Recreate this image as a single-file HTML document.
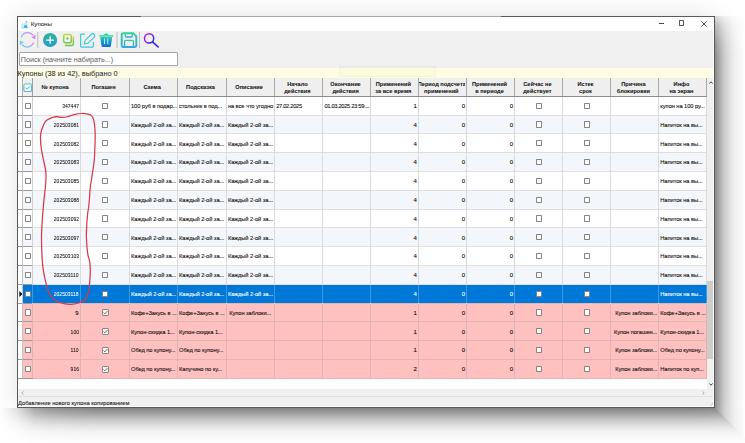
<!DOCTYPE html>
<html><head><meta charset="utf-8"><style>
*{box-sizing:border-box;margin:0;padding:0}
html,body{width:745px;height:443px;overflow:hidden;background:#fff}
body{position:relative;font-family:"Liberation Sans",sans-serif;color:#1b1b1b}
.ab{position:absolute}
.t{position:absolute;white-space:nowrap;overflow:hidden;font-size:5.75px;line-height:8px;letter-spacing:-0.08px;-webkit-text-stroke:0.08px currentColor}
.n{position:absolute;white-space:nowrap;font-size:6px;line-height:8px;text-align:right;-webkit-text-stroke:0.05px currentColor}
.hd{position:absolute;font-weight:bold;font-size:5.65px;line-height:6.9px;text-align:center;white-space:nowrap;overflow:hidden;color:#111;-webkit-text-stroke:0.05px currentColor}
.cb{position:absolute;width:6.3px;height:6.3px;border:0.85px solid #858585;background:#fff;border-radius:0.8px}
</style></head><body>

<div class="ab" style="left:17px;top:16px;width:698px;height:392px;box-shadow:0 0 24px rgba(0,0,0,0.12)"></div>
<div class="ab" style="left:715px;top:16px;width:30px;height:392px;background:linear-gradient(to right,rgba(0,0,0,0.420) 0px,rgba(0,0,0,0.370) 2px,rgba(0,0,0,0.310) 4px,rgba(0,0,0,0.260) 6px,rgba(0,0,0,0.210) 8px,rgba(0,0,0,0.160) 10.5px,rgba(0,0,0,0.130) 13.5px,rgba(0,0,0,0.090) 16.5px,rgba(0,0,0,0.060) 19.5px,rgba(0,0,0,0.037) 23.5px,rgba(0,0,0,0.020) 27.5px,rgba(0,0,0,0.000) 30px);-webkit-mask-image:linear-gradient(to bottom,rgba(0,0,0,0.27) 0px,rgba(0,0,0,0.55) 9px,rgba(0,0,0,0.75) 19px,rgba(0,0,0,0.89) 29px,rgba(0,0,0,0.98) 39px,#000 50px)"></div>
<div class="ab" style="left:0px;top:408px;width:715px;height:35px;background:linear-gradient(to bottom,rgba(0,0,0,0.470) 0px,rgba(0,0,0,0.410) 2px,rgba(0,0,0,0.310) 7px,rgba(0,0,0,0.245) 10px,rgba(0,0,0,0.190) 13px,rgba(0,0,0,0.125) 17px,rgba(0,0,0,0.087) 20px,rgba(0,0,0,0.048) 24px,rgba(0,0,0,0.030) 28px,rgba(0,0,0,0.015) 32px,rgba(0,0,0,0.000) 35px);-webkit-mask-image:linear-gradient(to right,rgba(0,0,0,0) 0px,rgba(0,0,0,0.1) 8px,rgba(0,0,0,0.23) 17px,rgba(0,0,0,0.43) 25px,rgba(0,0,0,0.7) 35px,rgba(0,0,0,0.84) 50px,rgba(0,0,0,0.93) 70px,#000 100px)"></div>
<div class="ab" style="left:715px;top:408px;width:30px;height:35px;background:linear-gradient(to right,rgba(0,0,0,0.420) 0px,rgba(0,0,0,0.370) 2px,rgba(0,0,0,0.310) 4px,rgba(0,0,0,0.260) 6px,rgba(0,0,0,0.210) 8px,rgba(0,0,0,0.160) 10.5px,rgba(0,0,0,0.130) 13.5px,rgba(0,0,0,0.090) 16.5px,rgba(0,0,0,0.060) 19.5px,rgba(0,0,0,0.037) 23.5px,rgba(0,0,0,0.020) 27.5px,rgba(0,0,0,0.000) 30px);clip-path:polygon(0 0,30px 0,30px 30px)"></div>
<div class="ab" style="left:715px;top:408px;width:30px;height:35px;background:linear-gradient(to bottom,rgba(0,0,0,0.470) 0px,rgba(0,0,0,0.410) 2px,rgba(0,0,0,0.310) 7px,rgba(0,0,0,0.245) 10px,rgba(0,0,0,0.190) 13px,rgba(0,0,0,0.125) 17px,rgba(0,0,0,0.087) 20px,rgba(0,0,0,0.048) 24px,rgba(0,0,0,0.030) 28px,rgba(0,0,0,0.015) 32px,rgba(0,0,0,0.000) 35px);clip-path:polygon(0 0,30px 30px,30px 35px,0 35px)"></div>
<div class="ab" style="left:17px;top:16px;width:698px;height:392px;background:#f0f0f0;border:1px solid #5a5a5a"></div>
<div class="ab" style="left:141px;top:16px;width:360px;height:1px;background:#a8a8a8"></div>
<div class="ab" style="left:18px;top:17px;width:696px;height:13.5px;background:#fff"></div>
<div class="ab" style="left:30.8px;top:20.4px;font-size:6.1px;line-height:7px;color:#222;-webkit-text-stroke:0.05px #222">Купоны</div>
<svg class="ab" style="left:20px;top:18.5px" width="10" height="10" viewBox="0 0 10 10">
<path d="M1 5.2 L6.8 3.6 L8.6 8.8 L1.4 8.8 Z" fill="#c9eef3"/>
<path d="M1.2 8.8 H8.6" stroke="#7fd0dd" stroke-width="0.8"/>
<circle cx="5.6" cy="7.4" r="1.5" fill="#2fa9cf"/>
<path d="M6.5 0.8 L7 2.2 L8.4 2.3 L7.3 3.1 L7.7 4.5 L6.5 3.7 L5.3 4.5 L5.7 3.1 L4.6 2.3 L6 2.2 Z" fill="#8fdbe6"/>
<path d="M2 4.6 L3.2 3.2" stroke="#a8e2ea" stroke-width="0.6"/>
</svg>
<div class="ab" style="left:658.5px;top:22.8px;width:5px;height:0.8px;background:#444"></div>
<div class="ab" style="left:679.2px;top:20.4px;width:5.2px;height:5.2px;border:0.8px solid #555;border-radius:0.8px"></div>
<svg class="ab" style="left:700.5px;top:20.5px" width="6" height="6" viewBox="0 0 6 6"><path d="M0.3 0.3 L5.7 5.7 M5.7 0.3 L0.3 5.7" stroke="#333" stroke-width="0.8"/></svg>
<svg class="ab" style="left:0;top:0" width="745" height="60" viewBox="0 0 745 60">
<defs>
<linearGradient id="gref" x1="0" y1="1" x2="1" y2="0"><stop offset="0" stop-color="#74cbf5"/><stop offset="1" stop-color="#d983f2"/></linearGradient>
<linearGradient id="gplus" x1="0" y1="0" x2="0" y2="1"><stop offset="0" stop-color="#2fb39b"/><stop offset="1" stop-color="#2a9ccc"/></linearGradient>
<linearGradient id="gcopy" x1="0" y1="0" x2="0" y2="1"><stop offset="0" stop-color="#b6dc4e"/><stop offset="1" stop-color="#6cc24a"/></linearGradient>
<linearGradient id="gedit" x1="0" y1="0" x2="1" y2="1"><stop offset="0" stop-color="#3fd2c8"/><stop offset="1" stop-color="#46c0e6"/></linearGradient>
<linearGradient id="gtrash" x1="0" y1="0" x2="0" y2="1"><stop offset="0" stop-color="#2ed3a8"/><stop offset="0.35" stop-color="#1a9fc8"/><stop offset="1" stop-color="#1466d8"/></linearGradient>
<linearGradient id="gsave" x1="0" y1="0" x2="0" y2="1"><stop offset="0" stop-color="#2fd39a"/><stop offset="1" stop-color="#33a4e8"/></linearGradient>
<linearGradient id="gsrch" x1="0" y1="0" x2="1" y2="1"><stop offset="0" stop-color="#c21fe6"/><stop offset="1" stop-color="#3d1fd6"/></linearGradient>
</defs>
<path d="M21.3 37.2 A6.8 6.8 0 0 1 33.2 35.4" fill="none" stroke="url(#gref)" stroke-width="1.3"/>
<path d="M35.6 34.6 L35.3 39.2 L31.3 37.6 Z" fill="#d983f2"/>
<path d="M33.6 42.6 A6.8 6.8 0 0 1 21.8 44.3" fill="none" stroke="url(#gref)" stroke-width="1.3"/>
<path d="M19.6 45.0 L20.0 40.4 L24.0 42.2 Z" fill="#74cbf5"/>
<rect x="37.3" y="32" width="1" height="16" fill="#bcbcbc"/>
<circle cx="50.1" cy="40" r="7.1" fill="url(#gplus)"/>
<path d="M46.3 40 H53.9 M50.1 36.2 V43.8" stroke="#fff" stroke-width="1.25"/>
<path d="M73.4 36.6 V43.6 Q73.4 45.6 71.4 45.6 H65" fill="none" stroke="url(#gcopy)" stroke-width="1.5"/>
<rect x="63.7" y="34.5" width="7.6" height="8.2" rx="1.4" fill="#f4f9ea" stroke="url(#gcopy)" stroke-width="1.5"/>
<rect x="66.3" y="37.4" width="2.2" height="2.2" fill="#72c64a" transform="rotate(45 67.4 38.5)"/>
<path d="M85 34.2 H81.4 Q80.6 34.2 80.6 35 V46.3 Q80.6 47.1 81.4 47.1 H92.6 Q93.4 47.1 93.4 46.3 V42" fill="none" stroke="url(#gedit)" stroke-width="1.2"/>
<path d="M84.2 44 L85 40.6 L91.6 34 Q92.6 33 93.6 34 L94.4 34.8 Q95.4 35.8 94.4 36.8 L87.8 43.4 Z" fill="none" stroke="url(#gedit)" stroke-width="1.2" stroke-linejoin="round"/>
<path d="M99.2 35.9 H113.2" stroke="#2ed3a8" stroke-width="1.4"/>
<path d="M104 35.3 Q104 33.4 105.5 33.4 H107 Q108.6 33.4 108.6 35.3 Z" fill="#2ed3a8"/>
<path d="M100.2 37 H112.2 L110.9 46 Q110.7 47.1 109.6 47.1 H102.8 Q101.7 47.1 101.5 46 Z" fill="url(#gtrash)"/>
<rect x="104.1" y="38.6" width="1" height="5.6" fill="#bdf3f0"/>
<rect x="107.3" y="38.6" width="1" height="5.6" fill="#bdf3f0"/>
<rect x="116.5" y="32" width="1" height="16" fill="#bcbcbc"/>
<path d="M123 33.2 H133.2 L136.3 36.3 V45.6 Q136.3 47 134.9 47 H122.9 Q121.7 47 121.7 45.6 V34.5 Q121.7 33.2 123 33.2 Z" fill="none" stroke="url(#gsave)" stroke-width="1.9"/>
<path d="M125.4 33.6 V36.2 Q125.4 37 126.2 37 H131.4 Q132.2 37 132.2 36.2 V33.6" fill="none" stroke="url(#gsave)" stroke-width="1.3"/>
<path d="M124.6 46.6 V41.4 Q124.6 40.4 125.6 40.4 H132.4 Q133.4 40.4 133.4 41.4 V46.6" fill="none" stroke="url(#gsave)" stroke-width="1.3"/>
<rect x="139" y="32" width="1" height="16" fill="#bcbcbc"/>
<circle cx="149.1" cy="38.4" r="4.6" fill="none" stroke="url(#gsrch)" stroke-width="1.5"/>
<path d="M152.5 41.9 L158.2 47" stroke="#3d1fd6" stroke-width="1.6" stroke-linecap="round"/>
</svg>
<div class="ab" style="left:19px;top:52px;width:159px;height:14px;background:#fff;border:1px solid #a6a6a6;border-radius:1px"></div>
<div class="ab" style="left:20.8px;top:55.5px;font-size:7.2px;line-height:8px;color:#5e5e5e;white-space:nowrap">Поиск (начните набирать...)</div>
<div class="ab" style="left:18px;top:68px;width:696px;height:9.6px;background:#fefde4"></div>
<div class="ab" style="left:17.6px;top:70.3px;font-size:7.35px;line-height:8.5px;color:#1a1a1a;white-space:nowrap">Купоны (38 из 42), выбрано 0</div>
<div class="ab" style="left:339px;top:66px;width:97px;height:11px;background:rgba(150,190,60,0.04);border:0.5px solid rgba(120,140,80,0.04)"></div>
<div class="ab" style="left:18px;top:77.6px;width:689px;height:311.4px;background:#fff"></div>
<div class="ab" style="left:18px;top:77.6px;width:689px;height:18.9px;background:#efefef"></div>
<div class="ab" style="left:18px;top:77.6px;width:4.5px;height:18.9px;background:#f8f8f8"></div>
<svg class="ab" style="left:23px;top:82.5px" width="9.5" height="9.5" viewBox="0 0 9.5 9.5">
<defs><linearGradient id="ghc" x1="0" y1="0" x2="0" y2="1"><stop offset="0" stop-color="#62d8c6"/><stop offset="1" stop-color="#5ab4ea"/></linearGradient></defs>
<rect x="0.9" y="0.9" width="7.7" height="7.7" rx="1.6" fill="#fff" stroke="url(#ghc)" stroke-width="1.3"/>
<path d="M2.6 4.9 L4.1 6.2 L7 3.2" fill="none" stroke="#3fb6c8" stroke-width="1"/>
</svg>
<div class="hd" style="left:31.7px;top:83.9px;width:46.8px">№ купона</div>
<div class="hd" style="left:79.5px;top:83.9px;width:48.1px">Погашен</div>
<div class="hd" style="left:128.6px;top:83.9px;width:47.0px">Схема</div>
<div class="hd" style="left:176.6px;top:83.9px;width:47.9px">Подсказка</div>
<div class="hd" style="left:225.5px;top:83.9px;width:47.3px">Описание</div>
<div class="hd" style="left:273.8px;top:80.7px;width:47.2px">Начало<br>действия</div>
<div class="hd" style="left:322.0px;top:80.7px;width:47.1px">Окончание<br>действия</div>
<div class="hd" style="left:370.1px;top:80.7px;width:46.6px">Применений<br>за все время</div>
<div class="hd" style="left:417.7px;top:80.7px;width:47.3px">Период подсчета<br>применений</div>
<div class="hd" style="left:466.0px;top:80.7px;width:47.0px">Применений<br>в периоде</div>
<div class="hd" style="left:514.0px;top:80.7px;width:46.9px">Сейчас не<br>действует</div>
<div class="hd" style="left:561.9px;top:80.7px;width:47.1px">Истек<br>срок</div>
<div class="hd" style="left:610.0px;top:80.7px;width:46.9px">Причина<br>блокировки</div>
<div class="hd" style="left:657.9px;top:80.7px;width:47.2px">Инфо<br>на экран</div>
<div class="ab" style="left:80px;top:78px;width:1px;height:18px;background:#a9a9a9"></div>
<div class="ab" style="left:129px;top:78px;width:1px;height:18px;background:#a9a9a9"></div>
<div class="ab" style="left:177px;top:78px;width:1px;height:18px;background:#a9a9a9"></div>
<div class="ab" style="left:226px;top:78px;width:1px;height:18px;background:#a9a9a9"></div>
<div class="ab" style="left:274px;top:78px;width:1px;height:18px;background:#a9a9a9"></div>
<div class="ab" style="left:322px;top:78px;width:1px;height:18px;background:#a9a9a9"></div>
<div class="ab" style="left:370px;top:78px;width:1px;height:18px;background:#a9a9a9"></div>
<div class="ab" style="left:418px;top:78px;width:1px;height:18px;background:#a9a9a9"></div>
<div class="ab" style="left:466px;top:78px;width:1px;height:18px;background:#a9a9a9"></div>
<div class="ab" style="left:514px;top:78px;width:1px;height:18px;background:#a9a9a9"></div>
<div class="ab" style="left:562px;top:78px;width:1px;height:18px;background:#a9a9a9"></div>
<div class="ab" style="left:610px;top:78px;width:1px;height:18px;background:#a9a9a9"></div>
<div class="ab" style="left:658px;top:78px;width:1px;height:18px;background:#a9a9a9"></div>
<div class="ab" style="left:706px;top:78px;width:1px;height:18px;background:#a9a9a9"></div>
<div class="ab" style="left:22px;top:78px;width:1px;height:18px;background:#b0b0b0"></div>
<div class="ab" style="left:32px;top:78px;width:1px;height:18px;background:#a0a0a0"></div>
<div class="ab" style="left:18px;top:96px;width:689px;height:1px;background:#8c8c8c"></div>
<div class="ab" style="left:32.5px;top:96.8px;width:674.3px;height:17.8px;background:#ffffff"></div>
<div class="ab" style="left:22.5px;top:96.8px;width:10px;height:17.8px;background:#ffffff"></div>
<div class="cb" style="left:24.5px;top:102.5px"></div>
<div class="n" style="right:666.3px;top:102.0px;color:#0a0a0a;transform:scaleX(0.84);transform-origin:100% 50%;">347447</div>
<div class="cb" style="left:102.0px;top:102.6px"></div>
<div class="t" style="left:131.0px;top:102.0px;width:46.0px;color:#0a0a0a">100 руб в подар...</div>
<div class="t" style="left:179.0px;top:102.0px;width:46.9px;color:#0a0a0a">стольник в под...</div>
<div class="t" style="left:227.9px;top:102.0px;width:46.3px;color:#0a0a0a">на все что угодно</div>
<div class="t" style="left:276.2px;top:102.0px;width:46.2px;color:#0a0a0a;letter-spacing:-0.32px">27.02.2025</div>
<div class="t" style="left:324.4px;top:102.0px;width:46.1px;color:#0a0a0a;letter-spacing:-0.32px">01.03.2025 23:59:...</div>
<div class="n" style="right:328.1px;top:102.0px;color:#0a0a0a;-webkit-text-stroke:0.1px currentColor;">1</div>
<div class="n" style="right:279.8px;top:102.0px;color:#0a0a0a;-webkit-text-stroke:0.1px currentColor;">0</div>
<div class="n" style="right:231.8px;top:102.0px;color:#0a0a0a;-webkit-text-stroke:0.1px currentColor;">0</div>
<div class="cb" style="left:535.9px;top:102.6px"></div>
<div class="cb" style="left:583.9px;top:102.6px"></div>
<div class="t" style="left:660.3px;top:102.0px;width:46.2px;color:#0a0a0a">купон на 100 ру...</div>
<div class="ab" style="left:32.5px;top:115.6px;width:674.3px;height:17.8px;background:#f3f6fb"></div>
<div class="ab" style="left:22.5px;top:115.6px;width:10px;height:17.8px;background:#f3f6fb"></div>
<div class="cb" style="left:24.5px;top:121.3px"></div>
<div class="n" style="right:666.3px;top:120.8px;color:#0a0a0a;transform:scaleX(0.84);transform-origin:100% 50%;">202503081</div>
<div class="cb" style="left:102.0px;top:121.4px"></div>
<div class="t" style="left:131.0px;top:120.8px;width:46.0px;color:#0a0a0a">Каждый 2-ой за...</div>
<div class="t" style="left:179.0px;top:120.8px;width:46.9px;color:#0a0a0a">Каждый 2-ой за...</div>
<div class="t" style="left:227.9px;top:120.8px;width:46.3px;color:#0a0a0a">Каждый 2-ой за...</div>
<div class="n" style="right:328.1px;top:120.8px;color:#0a0a0a;-webkit-text-stroke:0.1px currentColor;">4</div>
<div class="n" style="right:279.8px;top:120.8px;color:#0a0a0a;-webkit-text-stroke:0.1px currentColor;">0</div>
<div class="n" style="right:231.8px;top:120.8px;color:#0a0a0a;-webkit-text-stroke:0.1px currentColor;">0</div>
<div class="cb" style="left:535.9px;top:121.4px"></div>
<div class="cb" style="left:583.9px;top:121.4px"></div>
<div class="t" style="left:660.3px;top:120.8px;width:46.2px;color:#0a0a0a">Напиток на вы...</div>
<div class="ab" style="left:32.5px;top:134.4px;width:674.3px;height:17.8px;background:#ffffff"></div>
<div class="ab" style="left:22.5px;top:134.4px;width:10px;height:17.8px;background:#ffffff"></div>
<div class="cb" style="left:24.5px;top:140.1px"></div>
<div class="n" style="right:666.3px;top:139.6px;color:#0a0a0a;transform:scaleX(0.84);transform-origin:100% 50%;">202503082</div>
<div class="cb" style="left:102.0px;top:140.2px"></div>
<div class="t" style="left:131.0px;top:139.6px;width:46.0px;color:#0a0a0a">Каждый 2-ой за...</div>
<div class="t" style="left:179.0px;top:139.6px;width:46.9px;color:#0a0a0a">Каждый 2-ой за...</div>
<div class="t" style="left:227.9px;top:139.6px;width:46.3px;color:#0a0a0a">Каждый 2-ой за...</div>
<div class="n" style="right:328.1px;top:139.6px;color:#0a0a0a;-webkit-text-stroke:0.1px currentColor;">4</div>
<div class="n" style="right:279.8px;top:139.6px;color:#0a0a0a;-webkit-text-stroke:0.1px currentColor;">0</div>
<div class="n" style="right:231.8px;top:139.6px;color:#0a0a0a;-webkit-text-stroke:0.1px currentColor;">0</div>
<div class="cb" style="left:535.9px;top:140.2px"></div>
<div class="cb" style="left:583.9px;top:140.2px"></div>
<div class="t" style="left:660.3px;top:139.6px;width:46.2px;color:#0a0a0a">Напиток на вы...</div>
<div class="ab" style="left:32.5px;top:153.2px;width:674.3px;height:17.8px;background:#f3f6fb"></div>
<div class="ab" style="left:22.5px;top:153.2px;width:10px;height:17.8px;background:#f3f6fb"></div>
<div class="cb" style="left:24.5px;top:158.9px"></div>
<div class="n" style="right:666.3px;top:158.4px;color:#0a0a0a;transform:scaleX(0.84);transform-origin:100% 50%;">202503083</div>
<div class="cb" style="left:102.0px;top:159.0px"></div>
<div class="t" style="left:131.0px;top:158.4px;width:46.0px;color:#0a0a0a">Каждый 2-ой за...</div>
<div class="t" style="left:179.0px;top:158.4px;width:46.9px;color:#0a0a0a">Каждый 2-ой за...</div>
<div class="t" style="left:227.9px;top:158.4px;width:46.3px;color:#0a0a0a">Каждый 2-ой за...</div>
<div class="n" style="right:328.1px;top:158.4px;color:#0a0a0a;-webkit-text-stroke:0.1px currentColor;">4</div>
<div class="n" style="right:279.8px;top:158.4px;color:#0a0a0a;-webkit-text-stroke:0.1px currentColor;">0</div>
<div class="n" style="right:231.8px;top:158.4px;color:#0a0a0a;-webkit-text-stroke:0.1px currentColor;">0</div>
<div class="cb" style="left:535.9px;top:159.0px"></div>
<div class="cb" style="left:583.9px;top:159.0px"></div>
<div class="t" style="left:660.3px;top:158.4px;width:46.2px;color:#0a0a0a">Напиток на вы...</div>
<div class="ab" style="left:32.5px;top:172.0px;width:674.3px;height:17.8px;background:#ffffff"></div>
<div class="ab" style="left:22.5px;top:172.0px;width:10px;height:17.8px;background:#ffffff"></div>
<div class="cb" style="left:24.5px;top:177.7px"></div>
<div class="n" style="right:666.3px;top:177.2px;color:#0a0a0a;transform:scaleX(0.84);transform-origin:100% 50%;">202503085</div>
<div class="cb" style="left:102.0px;top:177.8px"></div>
<div class="t" style="left:131.0px;top:177.2px;width:46.0px;color:#0a0a0a">Каждый 2-ой за...</div>
<div class="t" style="left:179.0px;top:177.2px;width:46.9px;color:#0a0a0a">Каждый 2-ой за...</div>
<div class="t" style="left:227.9px;top:177.2px;width:46.3px;color:#0a0a0a">Каждый 2-ой за...</div>
<div class="n" style="right:328.1px;top:177.2px;color:#0a0a0a;-webkit-text-stroke:0.1px currentColor;">4</div>
<div class="n" style="right:279.8px;top:177.2px;color:#0a0a0a;-webkit-text-stroke:0.1px currentColor;">0</div>
<div class="n" style="right:231.8px;top:177.2px;color:#0a0a0a;-webkit-text-stroke:0.1px currentColor;">0</div>
<div class="cb" style="left:535.9px;top:177.8px"></div>
<div class="cb" style="left:583.9px;top:177.8px"></div>
<div class="t" style="left:660.3px;top:177.2px;width:46.2px;color:#0a0a0a">Напиток на вы...</div>
<div class="ab" style="left:32.5px;top:190.8px;width:674.3px;height:17.8px;background:#f3f6fb"></div>
<div class="ab" style="left:22.5px;top:190.8px;width:10px;height:17.8px;background:#f3f6fb"></div>
<div class="cb" style="left:24.5px;top:196.5px"></div>
<div class="n" style="right:666.3px;top:196.0px;color:#0a0a0a;transform:scaleX(0.84);transform-origin:100% 50%;">202503088</div>
<div class="cb" style="left:102.0px;top:196.6px"></div>
<div class="t" style="left:131.0px;top:196.0px;width:46.0px;color:#0a0a0a">Каждый 2-ой за...</div>
<div class="t" style="left:179.0px;top:196.0px;width:46.9px;color:#0a0a0a">Каждый 2-ой за...</div>
<div class="t" style="left:227.9px;top:196.0px;width:46.3px;color:#0a0a0a">Каждый 2-ой за...</div>
<div class="n" style="right:328.1px;top:196.0px;color:#0a0a0a;-webkit-text-stroke:0.1px currentColor;">4</div>
<div class="n" style="right:279.8px;top:196.0px;color:#0a0a0a;-webkit-text-stroke:0.1px currentColor;">0</div>
<div class="n" style="right:231.8px;top:196.0px;color:#0a0a0a;-webkit-text-stroke:0.1px currentColor;">0</div>
<div class="cb" style="left:535.9px;top:196.6px"></div>
<div class="cb" style="left:583.9px;top:196.6px"></div>
<div class="t" style="left:660.3px;top:196.0px;width:46.2px;color:#0a0a0a">Напиток на вы...</div>
<div class="ab" style="left:32.5px;top:209.6px;width:674.3px;height:17.8px;background:#ffffff"></div>
<div class="ab" style="left:22.5px;top:209.6px;width:10px;height:17.8px;background:#ffffff"></div>
<div class="cb" style="left:24.5px;top:215.3px"></div>
<div class="n" style="right:666.3px;top:214.8px;color:#0a0a0a;transform:scaleX(0.84);transform-origin:100% 50%;">202503092</div>
<div class="cb" style="left:102.0px;top:215.4px"></div>
<div class="t" style="left:131.0px;top:214.8px;width:46.0px;color:#0a0a0a">Каждый 2-ой за...</div>
<div class="t" style="left:179.0px;top:214.8px;width:46.9px;color:#0a0a0a">Каждый 2-ой за...</div>
<div class="t" style="left:227.9px;top:214.8px;width:46.3px;color:#0a0a0a">Каждый 2-ой за...</div>
<div class="n" style="right:328.1px;top:214.8px;color:#0a0a0a;-webkit-text-stroke:0.1px currentColor;">4</div>
<div class="n" style="right:279.8px;top:214.8px;color:#0a0a0a;-webkit-text-stroke:0.1px currentColor;">0</div>
<div class="n" style="right:231.8px;top:214.8px;color:#0a0a0a;-webkit-text-stroke:0.1px currentColor;">0</div>
<div class="cb" style="left:535.9px;top:215.4px"></div>
<div class="cb" style="left:583.9px;top:215.4px"></div>
<div class="t" style="left:660.3px;top:214.8px;width:46.2px;color:#0a0a0a">Напиток на вы...</div>
<div class="ab" style="left:32.5px;top:228.4px;width:674.3px;height:17.8px;background:#f3f6fb"></div>
<div class="ab" style="left:22.5px;top:228.4px;width:10px;height:17.8px;background:#f3f6fb"></div>
<div class="cb" style="left:24.5px;top:234.1px"></div>
<div class="n" style="right:666.3px;top:233.6px;color:#0a0a0a;transform:scaleX(0.84);transform-origin:100% 50%;">202503097</div>
<div class="cb" style="left:102.0px;top:234.2px"></div>
<div class="t" style="left:131.0px;top:233.6px;width:46.0px;color:#0a0a0a">Каждый 2-ой за...</div>
<div class="t" style="left:179.0px;top:233.6px;width:46.9px;color:#0a0a0a">Каждый 2-ой за...</div>
<div class="t" style="left:227.9px;top:233.6px;width:46.3px;color:#0a0a0a">Каждый 2-ой за...</div>
<div class="n" style="right:328.1px;top:233.6px;color:#0a0a0a;-webkit-text-stroke:0.1px currentColor;">4</div>
<div class="n" style="right:279.8px;top:233.6px;color:#0a0a0a;-webkit-text-stroke:0.1px currentColor;">0</div>
<div class="n" style="right:231.8px;top:233.6px;color:#0a0a0a;-webkit-text-stroke:0.1px currentColor;">0</div>
<div class="cb" style="left:535.9px;top:234.2px"></div>
<div class="cb" style="left:583.9px;top:234.2px"></div>
<div class="t" style="left:660.3px;top:233.6px;width:46.2px;color:#0a0a0a">Напиток на вы...</div>
<div class="ab" style="left:32.5px;top:247.2px;width:674.3px;height:17.8px;background:#ffffff"></div>
<div class="ab" style="left:22.5px;top:247.2px;width:10px;height:17.8px;background:#ffffff"></div>
<div class="cb" style="left:24.5px;top:252.9px"></div>
<div class="n" style="right:666.3px;top:252.4px;color:#0a0a0a;transform:scaleX(0.84);transform-origin:100% 50%;">202503103</div>
<div class="cb" style="left:102.0px;top:253.0px"></div>
<div class="t" style="left:131.0px;top:252.4px;width:46.0px;color:#0a0a0a">Каждый 2-ой за...</div>
<div class="t" style="left:179.0px;top:252.4px;width:46.9px;color:#0a0a0a">Каждый 2-ой за...</div>
<div class="t" style="left:227.9px;top:252.4px;width:46.3px;color:#0a0a0a">Каждый 2-ой за...</div>
<div class="n" style="right:328.1px;top:252.4px;color:#0a0a0a;-webkit-text-stroke:0.1px currentColor;">4</div>
<div class="n" style="right:279.8px;top:252.4px;color:#0a0a0a;-webkit-text-stroke:0.1px currentColor;">0</div>
<div class="n" style="right:231.8px;top:252.4px;color:#0a0a0a;-webkit-text-stroke:0.1px currentColor;">0</div>
<div class="cb" style="left:535.9px;top:253.0px"></div>
<div class="cb" style="left:583.9px;top:253.0px"></div>
<div class="t" style="left:660.3px;top:252.4px;width:46.2px;color:#0a0a0a">Напиток на вы...</div>
<div class="ab" style="left:32.5px;top:266.0px;width:674.3px;height:17.8px;background:#f3f6fb"></div>
<div class="ab" style="left:22.5px;top:266.0px;width:10px;height:17.8px;background:#f3f6fb"></div>
<div class="cb" style="left:24.5px;top:271.7px"></div>
<div class="n" style="right:666.3px;top:271.2px;color:#0a0a0a;transform:scaleX(0.84);transform-origin:100% 50%;">202503110</div>
<div class="cb" style="left:102.0px;top:271.8px"></div>
<div class="t" style="left:131.0px;top:271.2px;width:46.0px;color:#0a0a0a">Каждый 2-ой за...</div>
<div class="t" style="left:179.0px;top:271.2px;width:46.9px;color:#0a0a0a">Каждый 2-ой за...</div>
<div class="t" style="left:227.9px;top:271.2px;width:46.3px;color:#0a0a0a">Каждый 2-ой за...</div>
<div class="n" style="right:328.1px;top:271.2px;color:#0a0a0a;-webkit-text-stroke:0.1px currentColor;">4</div>
<div class="n" style="right:279.8px;top:271.2px;color:#0a0a0a;-webkit-text-stroke:0.1px currentColor;">0</div>
<div class="n" style="right:231.8px;top:271.2px;color:#0a0a0a;-webkit-text-stroke:0.1px currentColor;">0</div>
<div class="cb" style="left:535.9px;top:271.8px"></div>
<div class="cb" style="left:583.9px;top:271.8px"></div>
<div class="t" style="left:660.3px;top:271.2px;width:46.2px;color:#0a0a0a">Напиток на вы...</div>
<div class="ab" style="left:32.5px;top:284.8px;width:674.3px;height:17.8px;background:#0078d7"></div>
<div class="ab" style="left:22.5px;top:284.8px;width:10px;height:17.8px;background:#0078d7"></div>
<div class="cb" style="left:24.5px;top:290.5px"></div>
<svg class="ab" style="left:19px;top:290.9px" width="4" height="6" viewBox="0 0 4 6"><path d="M0.3 0 L3.6 3 L0.3 6 Z" fill="#111"/></svg>
<div class="n" style="right:666.3px;top:290.0px;color:#ffffff;transform:scaleX(0.84);transform-origin:100% 50%;">202503118</div>
<div class="cb" style="left:102.0px;top:290.6px"></div>
<div class="t" style="left:131.0px;top:290.0px;width:46.0px;color:#ffffff">Каждый 2-ой за...</div>
<div class="t" style="left:179.0px;top:290.0px;width:46.9px;color:#ffffff">Каждый 2-ой за...</div>
<div class="t" style="left:227.9px;top:290.0px;width:46.3px;color:#ffffff">Каждый 2-ой за...</div>
<div class="n" style="right:328.1px;top:290.0px;color:#ffffff;-webkit-text-stroke:0.1px currentColor;">4</div>
<div class="n" style="right:279.8px;top:290.0px;color:#ffffff;-webkit-text-stroke:0.1px currentColor;">0</div>
<div class="n" style="right:231.8px;top:290.0px;color:#ffffff;-webkit-text-stroke:0.1px currentColor;">0</div>
<div class="cb" style="left:535.9px;top:290.6px"></div>
<div class="cb" style="left:583.9px;top:290.6px"></div>
<div class="t" style="left:660.3px;top:290.0px;width:46.2px;color:#ffffff">Напиток на вы...</div>
<div class="ab" style="left:32.5px;top:303.6px;width:674.3px;height:17.8px;background:#ffc0c0"></div>
<div class="ab" style="left:22.5px;top:303.6px;width:10px;height:17.8px;background:#ffc0c0"></div>
<div class="cb" style="left:24.5px;top:309.3px"></div>
<div class="n" style="right:666.3px;top:308.8px;color:#0a0a0a;-webkit-text-stroke:0.1px currentColor;">9</div>
<svg class="ab" style="left:101.8px;top:309.2px" width="7" height="7" viewBox="0 0 7 7"><rect x="0.5" y="0.5" width="6" height="6" rx="0.6" fill="#f4f4f4" stroke="#7a7a7a" stroke-width="0.9"/><path d="M1.6 3.6 L2.9 4.9 L5.5 2.0" fill="none" stroke="#666" stroke-width="0.9"/></svg>
<div class="t" style="left:131.0px;top:308.8px;width:46.0px;color:#0a0a0a">Кофе+Закусь в ...</div>
<div class="t" style="left:179.0px;top:308.8px;width:46.9px;color:#0a0a0a">Кофе+Закусь в ...</div>
<div class="t" style="left:229.2px;top:308.8px;width:45px;color:#0a0a0a">Купон заблоки...</div>
<div class="n" style="right:328.1px;top:308.8px;color:#0a0a0a;-webkit-text-stroke:0.1px currentColor;">1</div>
<div class="n" style="right:279.8px;top:308.8px;color:#0a0a0a;-webkit-text-stroke:0.1px currentColor;">0</div>
<div class="n" style="right:231.8px;top:308.8px;color:#0a0a0a;-webkit-text-stroke:0.1px currentColor;">0</div>
<div class="cb" style="left:535.9px;top:309.4px"></div>
<div class="cb" style="left:583.9px;top:309.4px"></div>
<div class="t" style="left:612.2px;top:308.8px;width:45px;text-align:right;color:#0a0a0a">Купон заблоки...</div>
<div class="t" style="left:660.3px;top:308.8px;width:46.2px;color:#0a0a0a">Кофе+Закусь в ...</div>
<div class="ab" style="left:32.5px;top:322.4px;width:674.3px;height:17.8px;background:#ffc0c0"></div>
<div class="ab" style="left:22.5px;top:322.4px;width:10px;height:17.8px;background:#ffc0c0"></div>
<div class="cb" style="left:24.5px;top:328.1px"></div>
<div class="n" style="right:666.3px;top:327.6px;color:#0a0a0a;transform:scaleX(0.84);transform-origin:100% 50%;">100</div>
<svg class="ab" style="left:101.8px;top:328.0px" width="7" height="7" viewBox="0 0 7 7"><rect x="0.5" y="0.5" width="6" height="6" rx="0.6" fill="#f4f4f4" stroke="#7a7a7a" stroke-width="0.9"/><path d="M1.6 3.6 L2.9 4.9 L5.5 2.0" fill="none" stroke="#666" stroke-width="0.9"/></svg>
<div class="t" style="left:131.0px;top:327.6px;width:46.0px;color:#0a0a0a">Купон-скидка 1...</div>
<div class="t" style="left:179.0px;top:327.6px;width:46.9px;color:#0a0a0a">Купон-скидка 1...</div>
<div class="n" style="right:328.1px;top:327.6px;color:#0a0a0a;-webkit-text-stroke:0.1px currentColor;">1</div>
<div class="n" style="right:279.8px;top:327.6px;color:#0a0a0a;-webkit-text-stroke:0.1px currentColor;">0</div>
<div class="n" style="right:231.8px;top:327.6px;color:#0a0a0a;-webkit-text-stroke:0.1px currentColor;">0</div>
<div class="cb" style="left:535.9px;top:328.2px"></div>
<div class="cb" style="left:583.9px;top:328.2px"></div>
<div class="t" style="left:612.2px;top:327.6px;width:45px;text-align:right;color:#0a0a0a">Купон погашен...</div>
<div class="t" style="left:660.3px;top:327.6px;width:46.2px;color:#0a0a0a">Купон-скидка 1...</div>
<div class="ab" style="left:32.5px;top:341.2px;width:674.3px;height:17.8px;background:#ffc0c0"></div>
<div class="ab" style="left:22.5px;top:341.2px;width:10px;height:17.8px;background:#ffc0c0"></div>
<div class="cb" style="left:24.5px;top:346.9px"></div>
<div class="n" style="right:666.3px;top:346.4px;color:#0a0a0a;transform:scaleX(0.84);transform-origin:100% 50%;">110</div>
<svg class="ab" style="left:101.8px;top:346.8px" width="7" height="7" viewBox="0 0 7 7"><rect x="0.5" y="0.5" width="6" height="6" rx="0.6" fill="#f4f4f4" stroke="#7a7a7a" stroke-width="0.9"/><path d="M1.6 3.6 L2.9 4.9 L5.5 2.0" fill="none" stroke="#666" stroke-width="0.9"/></svg>
<div class="t" style="left:131.0px;top:346.4px;width:46.0px;color:#0a0a0a">Обед по купону...</div>
<div class="t" style="left:179.0px;top:346.4px;width:46.9px;color:#0a0a0a">Обед по купону...</div>
<div class="n" style="right:328.1px;top:346.4px;color:#0a0a0a;-webkit-text-stroke:0.1px currentColor;">1</div>
<div class="n" style="right:279.8px;top:346.4px;color:#0a0a0a;-webkit-text-stroke:0.1px currentColor;">0</div>
<div class="n" style="right:231.8px;top:346.4px;color:#0a0a0a;-webkit-text-stroke:0.1px currentColor;">0</div>
<div class="cb" style="left:535.9px;top:347.0px"></div>
<div class="cb" style="left:583.9px;top:347.0px"></div>
<div class="t" style="left:612.2px;top:346.4px;width:45px;text-align:right;color:#0a0a0a">Купон заблоки...</div>
<div class="t" style="left:660.3px;top:346.4px;width:46.2px;color:#0a0a0a">Обед по купону...</div>
<div class="ab" style="left:32.5px;top:360.0px;width:674.3px;height:17.8px;background:#ffc0c0"></div>
<div class="ab" style="left:22.5px;top:360.0px;width:10px;height:17.8px;background:#ffc0c0"></div>
<div class="cb" style="left:24.5px;top:365.7px"></div>
<div class="n" style="right:666.3px;top:365.2px;color:#0a0a0a;transform:scaleX(0.84);transform-origin:100% 50%;">916</div>
<svg class="ab" style="left:101.8px;top:365.6px" width="7" height="7" viewBox="0 0 7 7"><rect x="0.5" y="0.5" width="6" height="6" rx="0.6" fill="#f4f4f4" stroke="#7a7a7a" stroke-width="0.9"/><path d="M1.6 3.6 L2.9 4.9 L5.5 2.0" fill="none" stroke="#666" stroke-width="0.9"/></svg>
<div class="t" style="left:131.0px;top:365.2px;width:46.0px;color:#0a0a0a">Обед по купону...</div>
<div class="t" style="left:179.0px;top:365.2px;width:46.9px;color:#0a0a0a">Капучино по ку...</div>
<div class="n" style="right:328.1px;top:365.2px;color:#0a0a0a;-webkit-text-stroke:0.1px currentColor;">2</div>
<div class="n" style="right:279.8px;top:365.2px;color:#0a0a0a;-webkit-text-stroke:0.1px currentColor;">0</div>
<div class="n" style="right:231.8px;top:365.2px;color:#0a0a0a;-webkit-text-stroke:0.1px currentColor;">0</div>
<div class="cb" style="left:535.9px;top:365.8px"></div>
<div class="cb" style="left:583.9px;top:365.8px"></div>
<div class="t" style="left:612.2px;top:365.2px;width:45px;text-align:right;color:#0a0a0a">Купон заблоки...</div>
<div class="t" style="left:660.3px;top:365.2px;width:46.2px;color:#0a0a0a">Напиток по куп...</div>
<div class="ab" style="left:32px;top:115px;width:675px;height:1px;background:#dedede"></div>
<div class="ab" style="left:18px;top:115px;width:14.5px;height:1px;background:#9a9a9a"></div>
<div class="ab" style="left:32px;top:133px;width:675px;height:1px;background:#dedede"></div>
<div class="ab" style="left:18px;top:133px;width:14.5px;height:1px;background:#9a9a9a"></div>
<div class="ab" style="left:32px;top:152px;width:675px;height:1px;background:#dedede"></div>
<div class="ab" style="left:18px;top:152px;width:14.5px;height:1px;background:#9a9a9a"></div>
<div class="ab" style="left:32px;top:171px;width:675px;height:1px;background:#dedede"></div>
<div class="ab" style="left:18px;top:171px;width:14.5px;height:1px;background:#9a9a9a"></div>
<div class="ab" style="left:32px;top:190px;width:675px;height:1px;background:#dedede"></div>
<div class="ab" style="left:18px;top:190px;width:14.5px;height:1px;background:#9a9a9a"></div>
<div class="ab" style="left:32px;top:209px;width:675px;height:1px;background:#dedede"></div>
<div class="ab" style="left:18px;top:209px;width:14.5px;height:1px;background:#9a9a9a"></div>
<div class="ab" style="left:32px;top:227px;width:675px;height:1px;background:#dedede"></div>
<div class="ab" style="left:18px;top:227px;width:14.5px;height:1px;background:#9a9a9a"></div>
<div class="ab" style="left:32px;top:246px;width:675px;height:1px;background:#dedede"></div>
<div class="ab" style="left:18px;top:246px;width:14.5px;height:1px;background:#9a9a9a"></div>
<div class="ab" style="left:32px;top:265px;width:675px;height:1px;background:#dedede"></div>
<div class="ab" style="left:18px;top:265px;width:14.5px;height:1px;background:#9a9a9a"></div>
<div class="ab" style="left:32px;top:284px;width:675px;height:1px;background:#dedede"></div>
<div class="ab" style="left:18px;top:284px;width:14.5px;height:1px;background:#9a9a9a"></div>
<div class="ab" style="left:32px;top:303px;width:675px;height:1px;background:#e3b4b4"></div>
<div class="ab" style="left:18px;top:303px;width:14.5px;height:1px;background:#9a9a9a"></div>
<div class="ab" style="left:32px;top:321px;width:675px;height:1px;background:#e3b4b4"></div>
<div class="ab" style="left:18px;top:321px;width:14.5px;height:1px;background:#9a9a9a"></div>
<div class="ab" style="left:32px;top:340px;width:675px;height:1px;background:#e3b4b4"></div>
<div class="ab" style="left:18px;top:340px;width:14.5px;height:1px;background:#9a9a9a"></div>
<div class="ab" style="left:32px;top:359px;width:675px;height:1px;background:#e3b4b4"></div>
<div class="ab" style="left:18px;top:359px;width:14.5px;height:1px;background:#9a9a9a"></div>
<div class="ab" style="left:32px;top:378px;width:675px;height:1px;background:#e3b4b4"></div>
<div class="ab" style="left:18px;top:378px;width:14.5px;height:1px;background:#9a9a9a"></div>
<div class="ab" style="left:80px;top:97px;width:1px;height:281.3px;background:#dadada"></div>
<div class="ab" style="left:129px;top:97px;width:1px;height:281.3px;background:#dadada"></div>
<div class="ab" style="left:177px;top:97px;width:1px;height:281.3px;background:#dadada"></div>
<div class="ab" style="left:226px;top:97px;width:1px;height:281.3px;background:#dadada"></div>
<div class="ab" style="left:274px;top:97px;width:1px;height:281.3px;background:#dadada"></div>
<div class="ab" style="left:322px;top:97px;width:1px;height:281.3px;background:#dadada"></div>
<div class="ab" style="left:370px;top:97px;width:1px;height:281.3px;background:#dadada"></div>
<div class="ab" style="left:418px;top:97px;width:1px;height:281.3px;background:#dadada"></div>
<div class="ab" style="left:466px;top:97px;width:1px;height:281.3px;background:#dadada"></div>
<div class="ab" style="left:514px;top:97px;width:1px;height:281.3px;background:#dadada"></div>
<div class="ab" style="left:562px;top:97px;width:1px;height:281.3px;background:#dadada"></div>
<div class="ab" style="left:610px;top:97px;width:1px;height:281.3px;background:#dadada"></div>
<div class="ab" style="left:658px;top:97px;width:1px;height:281.3px;background:#dadada"></div>
<div class="ab" style="left:706px;top:97px;width:1px;height:281.3px;background:#dadada"></div>
<div class="ab" style="left:22px;top:97px;width:1px;height:281.3px;background:#c4c4c4"></div>
<div class="ab" style="left:32px;top:97px;width:1px;height:281.3px;background:#d0d0d0"></div>
<div class="ab" style="left:32px;top:284.8px;width:1px;height:17.8px;background:#3f97e0"></div>
<div class="ab" style="left:80px;top:284.8px;width:1px;height:17.8px;background:#3f97e0"></div>
<div class="ab" style="left:129px;top:284.8px;width:1px;height:17.8px;background:#3f97e0"></div>
<div class="ab" style="left:177px;top:284.8px;width:1px;height:17.8px;background:#3f97e0"></div>
<div class="ab" style="left:226px;top:284.8px;width:1px;height:17.8px;background:#3f97e0"></div>
<div class="ab" style="left:274px;top:284.8px;width:1px;height:17.8px;background:#3f97e0"></div>
<div class="ab" style="left:322px;top:284.8px;width:1px;height:17.8px;background:#3f97e0"></div>
<div class="ab" style="left:370px;top:284.8px;width:1px;height:17.8px;background:#3f97e0"></div>
<div class="ab" style="left:418px;top:284.8px;width:1px;height:17.8px;background:#3f97e0"></div>
<div class="ab" style="left:466px;top:284.8px;width:1px;height:17.8px;background:#3f97e0"></div>
<div class="ab" style="left:514px;top:284.8px;width:1px;height:17.8px;background:#3f97e0"></div>
<div class="ab" style="left:562px;top:284.8px;width:1px;height:17.8px;background:#3f97e0"></div>
<div class="ab" style="left:610px;top:284.8px;width:1px;height:17.8px;background:#3f97e0"></div>
<div class="ab" style="left:658px;top:284.8px;width:1px;height:17.8px;background:#3f97e0"></div>
<div class="ab" style="left:706px;top:284.8px;width:1px;height:17.8px;background:#3f97e0"></div>
<div class="ab" style="left:32px;top:303.6px;width:1px;height:74.7px;background:#e2b3b3"></div>
<div class="ab" style="left:80px;top:303.6px;width:1px;height:74.7px;background:#e2b3b3"></div>
<div class="ab" style="left:129px;top:303.6px;width:1px;height:74.7px;background:#e2b3b3"></div>
<div class="ab" style="left:177px;top:303.6px;width:1px;height:74.7px;background:#e2b3b3"></div>
<div class="ab" style="left:226px;top:303.6px;width:1px;height:74.7px;background:#e2b3b3"></div>
<div class="ab" style="left:274px;top:303.6px;width:1px;height:74.7px;background:#e2b3b3"></div>
<div class="ab" style="left:322px;top:303.6px;width:1px;height:74.7px;background:#e2b3b3"></div>
<div class="ab" style="left:370px;top:303.6px;width:1px;height:74.7px;background:#e2b3b3"></div>
<div class="ab" style="left:418px;top:303.6px;width:1px;height:74.7px;background:#e2b3b3"></div>
<div class="ab" style="left:466px;top:303.6px;width:1px;height:74.7px;background:#e2b3b3"></div>
<div class="ab" style="left:514px;top:303.6px;width:1px;height:74.7px;background:#e2b3b3"></div>
<div class="ab" style="left:562px;top:303.6px;width:1px;height:74.7px;background:#e2b3b3"></div>
<div class="ab" style="left:610px;top:303.6px;width:1px;height:74.7px;background:#e2b3b3"></div>
<div class="ab" style="left:658px;top:303.6px;width:1px;height:74.7px;background:#e2b3b3"></div>
<div class="ab" style="left:706px;top:303.6px;width:1px;height:74.7px;background:#e2b3b3"></div>
<div class="ab" style="left:706.5px;top:77.6px;width:7.5px;height:311.4px;background:#f0f0f0"></div>
<div class="ab" style="left:707px;top:280.5px;width:6px;height:78.5px;background:#cdcdcd"></div>
<svg class="ab" style="left:708.5px;top:81px" width="4" height="3" viewBox="0 0 4 3"><path d="M0.3 2.6 L2 0.8 L3.7 2.6" fill="none" stroke="#404040" stroke-width="1"/></svg>
<svg class="ab" style="left:708.5px;top:383.3px" width="4" height="3" viewBox="0 0 4 3"><path d="M0.3 0.4 L2 2.2 L3.7 0.4" fill="none" stroke="#404040" stroke-width="1"/></svg>
<div class="ab" style="left:18px;top:389px;width:696px;height:7.2px;background:#f0f0f0"></div>
<svg class="ab" style="left:20.5px;top:391px" width="3" height="4" viewBox="0 0 3 4"><path d="M2.6 0.3 L0.8 2 L2.6 3.7" fill="none" stroke="#a0a0a0" stroke-width="0.8"/></svg>
<svg class="ab" style="left:701.5px;top:391px" width="3" height="4" viewBox="0 0 3 4"><path d="M0.4 0.3 L2.2 2 L0.4 3.7" fill="none" stroke="#a0a0a0" stroke-width="0.8"/></svg>
<div class="ab" style="left:18px;top:396.2px;width:696px;height:0.6px;background:#e2e2e2"></div>
<div class="ab" style="left:18px;top:396.8px;width:696px;height:9.6px;background:#f0f0f0"></div>
<div class="ab" style="left:18px;top:399.8px;font-size:5.75px;line-height:7px;color:#111;white-space:nowrap;-webkit-text-stroke:0.06px #111">Добавление нового купона копированием</div>
<svg class="ab" style="left:709.5px;top:401.5px" width="4" height="4" viewBox="0 0 4 4"><path d="M3.5 0.5 L0.5 3.5 M3.5 2 L2 3.5" stroke="#bbb" stroke-width="0.6"/></svg>
<div class="ab" style="left:713px;top:30px;width:1px;height:377px;background:#fbfbfb"></div>
<div class="ab" style="left:18px;top:406px;width:696px;height:1px;background:#fbfbfb"></div>
<svg class="ab" style="left:0;top:0" width="745" height="443" viewBox="0 0 745 443">
<path d="M56.40 116.70 C58.13 116.52 58.95 117.25 60.60 117.30 C62.25 117.35 64.08 117.45 66.30 117.00 C68.52 116.55 71.37 115.18 73.90 114.60 C76.43 114.02 79.13 113.57 81.50 113.50 C83.87 113.43 86.37 113.77 88.10 114.20 C89.83 114.63 90.95 115.08 91.90 116.10 C92.85 117.12 93.32 118.48 93.80 120.30 C94.28 122.12 94.57 124.32 94.80 127.00 C95.03 129.68 95.20 132.62 95.20 136.40 C95.20 140.18 94.97 145.60 94.80 149.70 C94.63 153.80 94.62 156.92 94.20 161.00 C93.78 165.08 92.95 169.82 92.30 174.20 C91.65 178.58 90.85 182.33 90.30 187.30 C89.75 192.27 89.50 199.03 89.00 204.00 C88.50 208.97 87.73 211.65 87.30 217.10 C86.87 222.55 86.33 230.60 86.40 236.70 C86.47 242.80 87.15 249.55 87.70 253.70 C88.25 257.85 89.27 258.85 89.70 261.60 C90.13 264.35 90.30 266.73 90.30 270.20 C90.30 273.67 90.02 278.75 89.70 282.40 C89.38 286.05 89.12 289.25 88.40 292.10 C87.68 294.95 86.82 297.77 85.40 299.50 C83.98 301.23 82.23 301.70 79.90 302.50 C77.57 303.30 74.05 304.10 71.40 304.30 C68.75 304.50 66.45 304.20 64.00 303.70 C61.55 303.20 58.93 302.62 56.70 301.30 C54.47 299.98 52.32 298.55 50.60 295.80 C48.88 293.05 47.62 289.07 46.40 284.80 C45.18 280.53 44.02 274.67 43.30 270.20 C42.58 265.73 42.40 263.58 42.10 258.00 C41.80 252.42 41.43 243.52 41.50 236.70 C41.57 229.88 42.17 222.38 42.50 217.10 C42.83 211.82 43.17 208.68 43.50 205.00 C43.83 201.32 44.12 198.83 44.50 195.00 C44.88 191.17 45.58 185.90 45.80 182.00 C46.02 178.10 46.23 175.52 45.80 171.60 C45.37 167.68 43.97 162.43 43.20 158.50 C42.43 154.57 41.65 151.68 41.20 148.00 C40.75 144.32 40.42 139.43 40.50 136.40 C40.58 133.37 40.87 132.32 41.70 129.80 C42.53 127.28 44.08 123.20 45.50 121.30 C46.92 119.40 48.38 119.17 50.20 118.40 C52.02 117.63 54.67 116.88 56.40 116.70Z" fill="none" stroke="#d73a4b" stroke-width="1.25"/>
<path d="M55.5 117.3 Q57 115 58.3 117.4" fill="none" stroke="#d73a4b" stroke-width="1"/>
</svg>
</body></html>
